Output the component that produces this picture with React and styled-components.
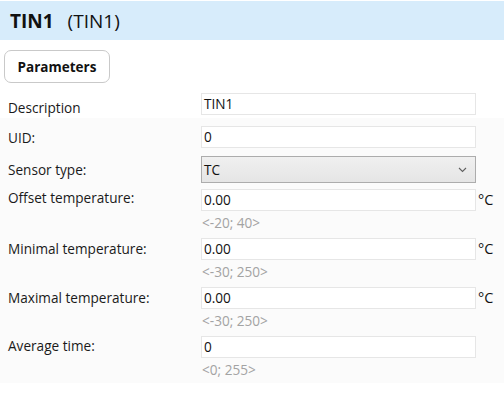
import React from "react";
import styled, { createGlobalStyle } from "styled-components";

const Global = createGlobalStyle`
  html, body { margin: 0; padding: 0; background: #ffffff; }
  body { font-family: "Open Sans", "Noto Sans", sans-serif; color: #1a1a1a; }
`;

const Page = styled.div`
  width: 504px;
  height: 398px;
  padding-top: 1px;
  box-sizing: border-box;
  overflow: hidden;
  background: #ffffff;
`;

const Header = styled.div`
  height: 39px;
  background: #d7ecfb;
  display: flex;
  align-items: center;
  padding-left: 10px;
  gap: 14px;
`;

const Title = styled.span`
  font-size: 19px;
  font-weight: ${(p) => (p.$bold ? 700 : 400)};
  color: #111;
`;

const Toolbar = styled.div`
  padding: 10px 4px 0;
  display: flex;
`;

const TabButton = styled.button`
  width: 106px;
  height: 33px;
  border: 1px solid #c9c9c9;
  border-radius: 7px;
  background: #ffffff;
  font-family: inherit;
  font-size: 13.5px;
  font-weight: 700;
  color: #111;
  padding: 0;
`;

const Row = styled.div`
  display: grid;
  grid-template-columns: 201px 275px auto;
  grid-template-rows: ${(p) => (p.$h ? `${p.$h}px` : "auto")};
  align-items: ${(p) => (p.$top ? "start" : "center")};
  margin-top: ${(p) => p.$mt || 0}px;
`;

const Label = styled.div`
  padding-left: 8px;
  font-size: 13.6px;
  line-height: 19px;
  color: #1a1a1a;
  padding-top: ${(p) => p.$pt || 0}px;
  margin-top: ${(p) => p.$shift || 0}px;
  align-self: ${(p) => (p.$end ? "end" : "auto")};
  margin-bottom: ${(p) => (p.$end ? "-2px" : "0")};
`;

const Field = styled.div`
  display: flex;
  flex-direction: column;
`;

const Input = styled.div`
  height: 22px;
  box-sizing: border-box;
  border: 1px solid #e6e6e6;
  background: #ffffff;
  font-size: 13.6px;
  line-height: 20px;
  padding-left: 2px;
  color: #111;
`;

const Select = styled.div`
  height: 27px;
  box-sizing: border-box;
  border: 1px solid #acacac;
  background: linear-gradient(#f0f0f0, #e5e5e5);
  font-size: 13.6px;
  display: flex;
  align-items: center;
  justify-content: space-between;
  padding: 0 8px 0 2px;
  color: #111;
`;

const Hint = styled.div`
  height: 27px;
  box-sizing: border-box;
  padding-top: 4px;
  line-height: 16px;
  font-size: 13.6px;
  color: #a3a3a3;
  padding-left: 1px;
`;

const Unit = styled.span`
  font-size: 14.5px;
  padding-left: 2px;
  color: #111;
  align-self: start;
  margin-top: 1px;
`;

const Panel = styled.div`
  margin-top: 3px;
  padding-top: 8px;
  background: #fbfbfb;
  height: 265px;
  box-sizing: border-box;
`;

const Chevron = () => (
  <svg width="9" height="6" viewBox="0 0 9 6">
    <path d="M1 1 L4.5 4.5 L8 1" fill="none" stroke="#606060" strokeWidth="1.1" />
  </svg>
);

const ranged = [
  { label: "Offset temperature:", value: "0.00", hint: "<-20; 40>", unit: "°C", mt: 6, shift: -2 },
  { label: "Minimal temperature:", value: "0.00", hint: "<-30; 250>", unit: "°C", mt: 0, shift: 0 },
  { label: "Maximal temperature:", value: "0.00", hint: "<-30; 250>", unit: "°C", mt: 0, shift: 0 },
  { label: "Average time:", value: "0", hint: "<0; 255>", unit: "", mt: 0, shift: -1 },
];

export default function App() {
  return (
    <>
      <Global />
      <Page>
        <Header>
          <Title $bold>TIN1</Title>
          <Title>(TIN1)</Title>
        </Header>
        <Toolbar>
          <TabButton>Parameters</TabButton>
        </Toolbar>
        <Row $mt={10} $h={22}>
          <Label $end>Description</Label>
          <Input>TIN1</Input>
        </Row>
        <Panel>
          <Row $h={22}>
            <Label>UID:</Label>
            <Input>0</Input>
          </Row>
          <Row $mt={8} $h={27}>
            <Label>Sensor type:</Label>
            <Select>
              <span>TC</span>
              <Chevron />
            </Select>
          </Row>
          {ranged.map((r) => (
            <Row key={r.label} $top $mt={r.mt}>
              <Label $pt={1} $shift={r.shift}>{r.label}</Label>
              <Field>
                <Input>{r.value}</Input>
                <Hint>{r.hint}</Hint>
              </Field>
              {r.unit ? <Unit>{r.unit}</Unit> : <span />}
            </Row>
          ))}
        </Panel>
      </Page>
    </>
  );
}
